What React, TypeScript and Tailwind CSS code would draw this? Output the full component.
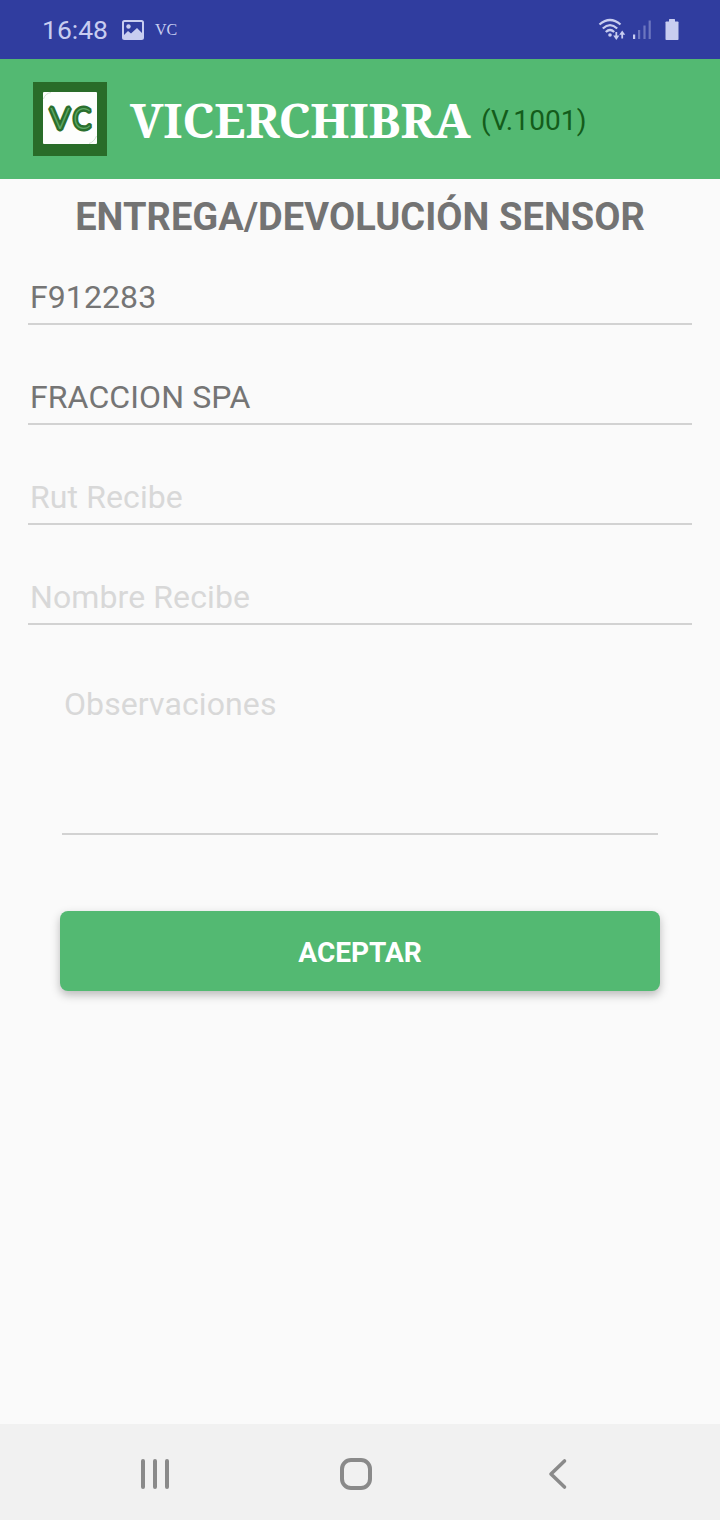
interface FieldProps {
  text: string;
  filled?: boolean;
}

const fields: FieldProps[] = [
  { text: "F912283", filled: true },
  { text: "FRACCION SPA", filled: true },
  { text: "Rut Recibe" },
  { text: "Nombre Recibe" },
];

function StatusBar() {
  return (
    <div className="flex h-[59px] items-center bg-[#303d9f] pr-[41px] pl-[42px] text-[#c8cdf0]">
      <span className="w-[66px] pt-px text-[26.5px] leading-[60px]">16:48</span>

      <svg className="ml-[14px]" width="22" height="20" viewBox="0 0 22 20">
        <rect x="1" y="1" width="20" height="18" rx="1.5" fill="none" stroke="currentColor" strokeWidth="2" />
        <circle cx="6.5" cy="6.5" r="2.2" fill="currentColor" />
        <path d="M2 15 L6 11 L9 13.5 L15 8 L20 13 V18 H2 Z" fill="currentColor" />
      </svg>

      <span className="ml-[11px] pt-px font-['Liberation_Serif',serif] text-[16px]">VC</span>

      <div className="ml-auto flex items-center">
        <svg width="28" height="24" viewBox="0 0 28 24" fill="none" stroke="currentColor">
          <path d="M1.5 6.5 Q12 -2.5 22.5 6.5" strokeWidth="2.3" />
          <path d="M4.8 10.5 Q12 3.8 19.2 10.5" strokeWidth="2.3" />
          <path d="M7.8 14 Q12 10 16.2 14" strokeWidth="2.3" />
          <circle cx="12" cy="17" r="1.8" fill="currentColor" stroke="none" />
          <path d="M18.3 14 V19" strokeWidth="1.8" />
          <path d="M15.2 17.5 H21.4 L18.3 22 Z" fill="currentColor" stroke="none" />
          <path d="M24.2 16 V20.5" strokeWidth="1.8" />
          <path d="M21.2 16.7 H27.2 L24.2 12.5 Z" fill="currentColor" stroke="none" />
        </svg>

        <svg className="ml-[7px]" width="19" height="20" viewBox="0 0 19 20" fill="currentColor">
          <rect x="0" y="14.5" width="2.2" height="4.5" />
          <rect x="5" y="10" width="2.2" height="9" opacity="0.4" />
          <rect x="10.4" y="5.5" width="2.2" height="13.5" opacity="0.4" />
          <rect x="15.6" y="0.5" width="2.2" height="18.5" opacity="0.4" />
        </svg>

        <svg className="ml-[13px]" width="14" height="22" viewBox="0 0 14 22" fill="currentColor">
          <rect x="4" y="0" width="6" height="4" rx="0.5" />
          <rect x="0.5" y="2.5" width="13" height="18.5" rx="0.8" />
        </svg>
      </div>
    </div>
  );
}

function Logo() {
  return (
    <svg width="74" height="74" viewBox="0 0 74 74">
      <rect width="74" height="74" fill="#296c29" />
      <rect x="10" y="10" width="54" height="52" rx="1" fill="#fdfefd" />
      <path d="M10.5 17 Q12 11.5 18 10.5" fill="none" stroke="#d3e2d3" />
      <path d="M56 61.5 Q61 60 63.5 54" fill="none" stroke="#d3e2d3" />
      <g
        fill="#5da765"
        stroke="#2a6f2d"
        strokeWidth="4.8"
        strokeLinejoin="bevel"
        className="font-[Lato,sans-serif] text-[29px] font-light [paint-order:stroke]"
      >
        <text x="17" y="46.5" textLength="20" lengthAdjust="spacingAndGlyphs">
          V
        </text>
        <text x="40" y="46.5" textLength="18" lengthAdjust="spacingAndGlyphs">
          C
        </text>
      </g>
    </svg>
  );
}

function Header() {
  return (
    <header className="flex h-[120px] items-center bg-[#53b972] pl-[33px]">
      <Logo />
      <h1 className="ml-[23px] w-[341px] pt-[2px] font-['Noto_Serif','DejaVu_Serif_Condensed','DejaVu_Serif',serif] text-[48px] leading-[60px] font-bold tracking-[-0.2px] whitespace-nowrap text-white">
        VICERCHIBRA
      </h1>
      <span className="ml-[10px] pt-[3px] text-[28px] leading-[60px] tracking-[0.1px] text-[#145c1b]">
        (V.1001)
      </span>
    </header>
  );
}

function Field({ text, filled }: FieldProps) {
  return (
    <div
      className={`mb-[40px] h-[60px] border-b-2 border-[#d2d2d2] pl-[2px] text-[32px] leading-[64px] tracking-[0.1px] ${
        filled ? "text-[#757575]" : "text-[#d8d8d8]"
      }`}
    >
      {text}
    </div>
  );
}

function NavBar() {
  return (
    <nav className="flex h-24 items-center bg-[#f1f1f1] pt-1 pl-[140px] text-[#8a8a8a]">
      <svg width="30" height="32" viewBox="0 0 30 32" stroke="currentColor" strokeWidth="4" strokeLinecap="round">
        <path d="M3 3 V29 M15 3 V29 M27 3 V29" />
      </svg>
      <svg className="ml-[170px]" width="32" height="32" viewBox="0 0 32 32" fill="none" stroke="currentColor" strokeWidth="4">
        <rect x="2" y="2" width="28" height="28" rx="9" />
      </svg>
      <svg
        className="ml-[176px]"
        width="20"
        height="32"
        viewBox="0 0 20 32"
        fill="none"
        stroke="currentColor"
        strokeWidth="3.6"
        strokeLinecap="round"
        strokeLinejoin="round"
      >
        <path d="M16.5 3 L3 16 L16.5 29" />
      </svg>
    </nav>
  );
}

export default function App() {
  return (
    <div className="flex h-[1520px] w-[720px] flex-col bg-[#fafafa] font-[Roboto,sans-serif]">
      <StatusBar />
      <Header />

      <main className="flex flex-1 flex-col px-[28px] pt-[12px]">
        <h2 className="mb-[22px] text-center text-[38px] leading-[52px] font-bold tracking-[0.06px] whitespace-nowrap text-[#737373]">
          ENTREGA/DEVOLUCIÓN SENSOR
        </h2>

        {fields.map((field) => (
          <Field key={field.text} {...field} />
        ))}

        <div className="mx-[34px] mt-[8px] h-[162px] border-b-2 border-[#d2d2d2] pl-[2px] text-[32px] leading-[62px] tracking-[0.1px] text-[#d8d8d8]">
          Observaciones
        </div>

        <button className="mx-[32px] mt-[76px] h-20 rounded-lg bg-[#53b972] pt-[4px] text-[28px] font-bold text-white shadow-[0_4px_10px_rgba(0,0,0,0.26)]">
          ACEPTAR
        </button>
      </main>

      <NavBar />
    </div>
  );
}
